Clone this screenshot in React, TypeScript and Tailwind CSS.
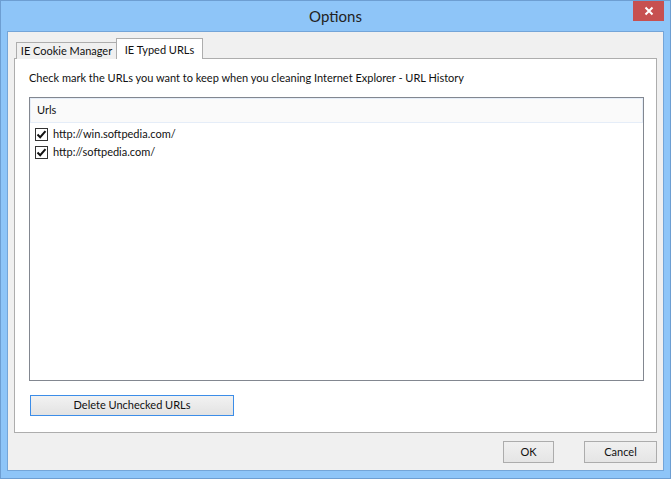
import React from "react";

const font = { fontFamily: 'Lato, "Noto Sans", Arial, sans-serif' };

function Check() {
  return (
    <div className="w-[13px] h-[13px] border border-[#333] bg-white flex items-center justify-center shrink-0">
      <svg width="11" height="11" viewBox="0 0 11 11">
        <path d="M1.5 5.5 L4.2 8.2 L9.5 2.2" stroke="#111" strokeWidth="2" fill="none" />
      </svg>
    </div>
  );
}

export default function App() {
  return (
    <div
      className="w-[671px] h-[479px] bg-[#8ec5f8] border border-[#6d9ed2] flex flex-col text-[11px] text-[#111] overflow-hidden whitespace-nowrap"
      style={font}
    >
      <div className="relative h-[30px] flex items-center justify-center shrink-0">
        <span className="text-[15px] text-[#222] mt-[1px]">Options</span>
        <div className="absolute right-[6px] top-0 w-[31px] h-[20px] bg-[#c75050] flex items-center justify-center">
          <svg width="10" height="10" viewBox="0 0 10 10">
            <path d="M1.5 1.5 L8.5 8.5 M8.5 1.5 L1.5 8.5" stroke="#fff" strokeWidth="2" />
          </svg>
        </div>
      </div>
      <div className="mx-[6px] h-[440px] bg-[#f0f0f0] border border-[#74a5d8] flex flex-col px-[6px] pt-[6px]">
        <div className="flex items-end h-[21px] -mb-px pl-[2px] relative z-10">
          <div className="w-[101px] shrink-0 h-[17px] border border-[#adadad] border-b-0 bg-[#f0f0f0] flex items-center justify-center">
            IE Cookie Manager
          </div>
          <div className="w-[87px] shrink-0 h-[21px] border border-[#adadad] border-b-0 bg-white flex items-start justify-center pt-[3px] -ml-px">
            IE Typed URLs
          </div>
        </div>
        <div className="h-[375px] border border-[#adadad] bg-white flex flex-col pl-[14px] pr-[12px]">
          <div className="h-[38px] flex items-center pt-[1px]">
            Check mark the URLs you want to keep when you cleaning Internet Explorer - URL History
          </div>
          <div className="h-[284px] border border-[#828790] flex flex-col">
            <div className="h-[25px] bg-[#fafafa] border border-[#e5edf8] flex items-center pl-[6px]">
              Urls
            </div>
            <div className="flex flex-col pl-[5px] pt-[2px]">
              <div className="h-[18px] flex items-center gap-[5px]">
                <Check />
                <span>http://win.softpedia.com/</span>
              </div>
              <div className="h-[18px] flex items-center gap-[5px]">
                <Check />
                <span>http://softpedia.com/</span>
              </div>
            </div>
          </div>
          <div className="pt-[14px] pl-[1px]">
            <div className="w-[204px] h-[21px] border border-[#3c8de8] bg-gradient-to-b from-[#f2f2f2] to-[#e3e3e3] flex items-center justify-center">
              Delete Unchecked URLs
            </div>
          </div>
        </div>
        <div className="flex justify-end gap-[30px] pt-[8px] pr-[0px]">
          <div className="w-[51px] h-[22px] border border-[#acacac] bg-gradient-to-b from-[#f0f0f0] to-[#e5e5e5] flex items-center justify-center">
            OK
          </div>
          <div className="w-[73px] h-[22px] border border-[#acacac] bg-gradient-to-b from-[#f0f0f0] to-[#e5e5e5] flex items-center justify-center">
            Cancel
          </div>
        </div>
      </div>
    </div>
  );
}
